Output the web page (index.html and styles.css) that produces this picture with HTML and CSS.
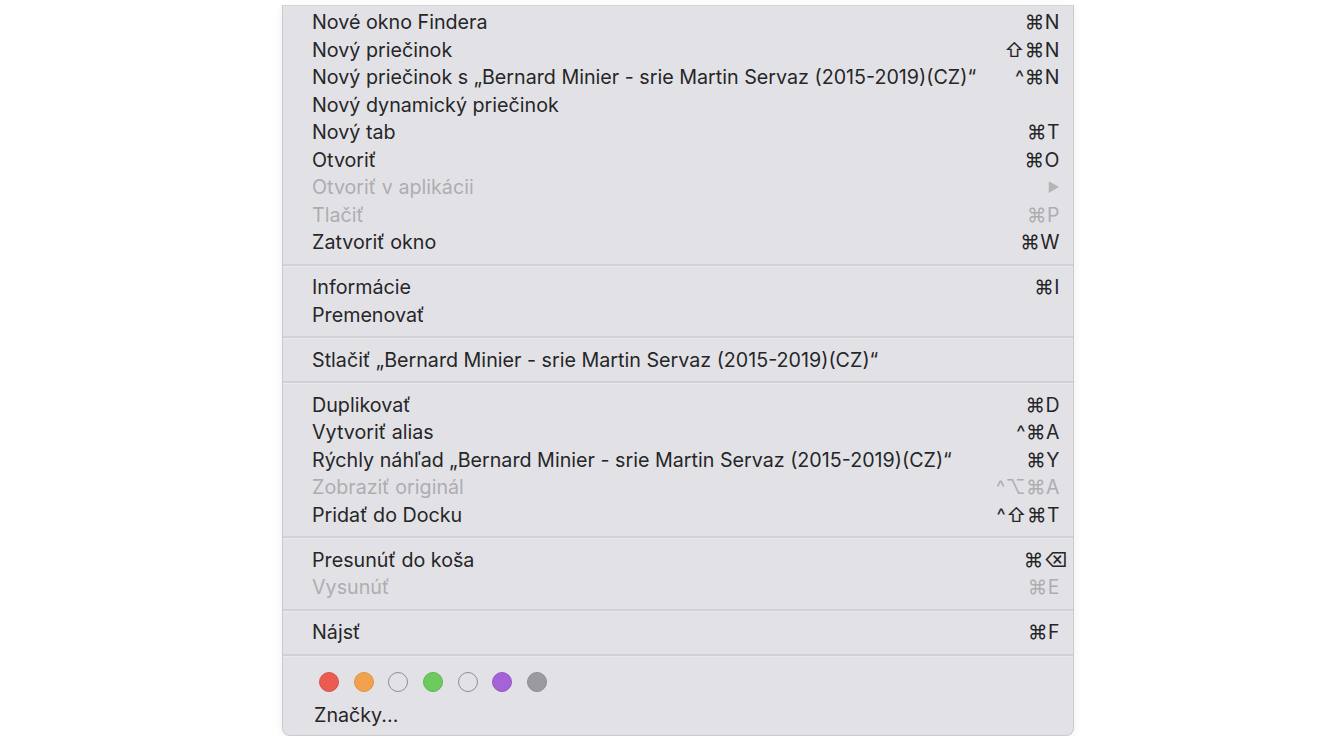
FILE: index.html
```html
<!DOCTYPE html>
<html lang="sk">
<head>
<meta charset="utf-8">
<title>Menu</title>
<link rel="stylesheet" href="styles.css">
</head>
<body>
<div class="menu">
  <div class="group">
    <div class="item"><span class="label">Nové okno Findera</span><span class="key">⌘N</span></div>
    <div class="item"><span class="label">Nový priečinok</span><span class="key">⇧⌘N</span></div>
    <div class="item"><span class="label">Nový priečinok s „Bernard Minier - srie Martin Servaz (2015-2019)(CZ)“</span><span class="key">^⌘N</span></div>
    <div class="item"><span class="label">Nový dynamický priečinok</span><span class="key"></span></div>
    <div class="item"><span class="label">Nový tab</span><span class="key">⌘T</span></div>
    <div class="item"><span class="label">Otvoriť</span><span class="key">⌘O</span></div>
    <div class="item disabled"><span class="label">Otvoriť v aplikácii</span><span class="key arrow">▶</span></div>
    <div class="item disabled"><span class="label">Tlačiť</span><span class="key">⌘P</span></div>
    <div class="item"><span class="label">Zatvoriť okno</span><span class="key">⌘W</span></div>
  </div>
  <div class="sep"></div>
  <div class="group">
    <div class="item"><span class="label">Informácie</span><span class="key">⌘I</span></div>
    <div class="item"><span class="label">Premenovať</span><span class="key"></span></div>
  </div>
  <div class="sep"></div>
  <div class="group">
    <div class="item"><span class="label">Stlačiť „Bernard Minier - srie Martin Servaz (2015-2019)(CZ)“</span><span class="key"></span></div>
  </div>
  <div class="sep"></div>
  <div class="group">
    <div class="item"><span class="label">Duplikovať</span><span class="key">⌘D</span></div>
    <div class="item"><span class="label">Vytvoriť alias</span><span class="key">^⌘A</span></div>
    <div class="item"><span class="label">Rýchly náhľad „Bernard Minier - srie Martin Servaz (2015-2019)(CZ)“</span><span class="key">⌘Y</span></div>
    <div class="item disabled"><span class="label">Zobraziť originál</span><span class="key">^⌥⌘A</span></div>
    <div class="item"><span class="label">Pridať do Docku</span><span class="key">^⇧⌘T</span></div>
  </div>
  <div class="sep"></div>
  <div class="group">
    <div class="item"><span class="label">Presunúť do koša</span><span class="key wide">⌘⌫</span></div>
    <div class="item disabled"><span class="label">Vysunúť</span><span class="key">⌘E</span></div>
  </div>
  <div class="sep"></div>
  <div class="group">
    <div class="item"><span class="label">Nájsť</span><span class="key">⌘F</span></div>
  </div>
  <div class="sep"></div>
  <div class="tags">
    <span class="dot red"></span>
    <span class="dot orange"></span>
    <span class="dot empty"></span>
    <span class="dot green"></span>
    <span class="dot empty"></span>
    <span class="dot purple"></span>
    <span class="dot gray"></span>
  </div>
  <div class="item tagsitem"><span class="label">Značky...</span></div>
</div>
</body>
</html>
```

FILE: styles.css
```css
html, body {
  margin: 0;
  padding: 0;
  background: #ffffff;
}
body {
  font-family: "Inter", "Liberation Sans", "DejaVu Sans", sans-serif;
  color: #262628;
}
.menu {
  margin-left: 282px;
  margin-top: 5px;
  width: 792px;
  background: #e2e2e6;
  border: 1px solid #cbcbcf;
  border-top: 1px solid #d6d6da;
  border-radius: 0 0 8px 8px;
  box-shadow: 0 2px 10px rgba(0, 0, 0, 0.07);
  padding: 3px 0 5px 0;
  box-sizing: border-box;
}
.item {
  display: flex;
  justify-content: space-between;
  align-items: center;
  height: 27.5px;
  padding: 0 13px 0 29px;
  font-size: 19.7px;
  line-height: 27.5px;
  white-space: nowrap;
}
.key {
  font-family: "Inter", "DejaVu Sans", sans-serif;
  font-size: 19.5px;
  letter-spacing: 0.5px;
}
.key.wide {
  margin-right: -8px;
}
.key.arrow {
  font-size: 13px;
  color: #b4b4b8;
}
.disabled {
  color: #adadb1;
}
.sep {
  height: 17.5px;
  display: flex;
  align-items: center;
}
.sep::before {
  content: "";
  display: block;
  width: 100%;
  height: 2px;
  background: #d1d1d5;
  border-bottom: 1px solid #e9e9ec;
}
.tags {
  display: flex;
  align-items: flex-start;
  gap: 14.7px;
  height: 38px;
  padding-top: 8px;
  padding-left: 36px;
  box-sizing: border-box;
}
.dot {
  width: 20px;
  height: 20px;
  border-radius: 50%;
  box-sizing: border-box;
  flex: none;
}
.red { background: #ec5b51; border: 1px solid #d9514a; }
.orange { background: #f1a24c; border: 1px solid #dd9444; }
.green { background: #6dca5f; border: 1px solid #5fb554; }
.purple { background: #a563d7; border: 1px solid #9457c4; }
.gray { background: #9b9b9f; border: 1px solid #8c8c90; }
.empty { background: transparent; border: 1.5px solid #8e8e92; }
.tagsitem {
  padding-left: 31px;
}
```
